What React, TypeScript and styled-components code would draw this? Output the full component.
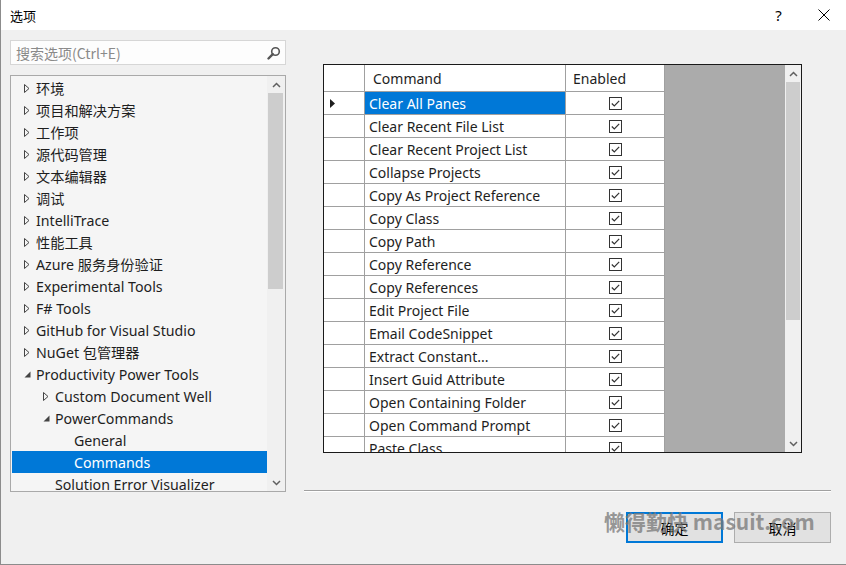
import styled, { createGlobalStyle } from "styled-components";

const GlobalStyle = createGlobalStyle`
  html, body {
    margin: 0;
    padding: 0;
    background: #f0f0f0;
  }
  body {
    font-family: "Noto Sans", "Noto Sans CJK SC", sans-serif;
    color: #1e1e1e;
  }
`;

const Window = styled.div`
  width: 846px;
  height: 565px;
  box-sizing: border-box;
  border-left: 1px solid #8c8c8c;
  border-bottom: 1px solid #8c8c8c;
  background: #f0f0f0;
  display: flex;
  flex-direction: column;
  position: relative;
  overflow: hidden;
`;

const TitleBar = styled.div`
  height: 30px;
  background: #ffffff;
  display: flex;
  align-items: center;
  padding-left: 9px;
  font-family: "Noto Sans CJK SC", sans-serif;
  font-size: 13px;
  color: #000;
`;

const TitleText = styled.div`
  flex: 1;
`;

const TitleButton = styled.div`
  width: 45px;
  height: 30px;
  display: flex;
  align-items: center;
  justify-content: center;
  font-family: "Noto Sans", sans-serif;
  font-size: 15px;
  color: #000;
`;

const Body = styled.div`
  flex: 1;
  display: flex;
  padding: 10px 15px 0 9px;
`;

const LeftColumn = styled.div`
  width: 276px;
  display: flex;
  flex-direction: column;
  gap: 10px;
`;

const SearchBox = styled.div`
  height: 25px;
  box-sizing: border-box;
  border: 1px solid #d6d6d6;
  background: #fdfdfd;
  display: flex;
  align-items: center;
  padding: 0 4px 0 5px;
  font-family: "Noto Sans CJK SC", sans-serif;
  font-size: 14px;
  color: #8a8a8a;
`;

const SearchText = styled.div`
  flex: 1;
`;

const TreePanel = styled.div`
  height: 417px;
  box-sizing: border-box;
  border: 1px solid #a9a9a9;
  background: #f5f5f5;
  display: flex;
`;

const TreeList = styled.div`
  flex: 1;
  padding: 1px 0 0 1px;
  overflow: hidden;
`;

const TreeRow = styled.div<{ $level: number; $selected?: boolean }>`
  height: 22px;
  display: flex;
  align-items: center;
  padding-left: ${(p) => 8 + p.$level * 19}px;
  background: ${(p) => (p.$selected ? "#0078d7" : "transparent")};
  color: ${(p) => (p.$selected ? "#ffffff" : "#1e1e1e")};
  font-size: 14.2px;
  white-space: nowrap;
`;

const Arrow = styled.div`
  width: 14px;
  height: 22px;
  margin-right: 2px;
  display: flex;
  align-items: center;
  justify-content: center;
`;

const ScrollBar = styled.div<{ $width: number }>`
  width: ${(p) => p.$width}px;
  background: #f0f0f0;
  display: flex;
  flex-direction: column;
`;

const ScrollArrow = styled.div`
  height: 17px;
  display: flex;
  align-items: center;
  justify-content: center;
`;

const ScrollThumb = styled.div<{ $height: number; $inset: string }>`
  height: ${(p) => p.$height}px;
  margin: ${(p) => p.$inset};
  background: #cdcdcd;
`;

const ScrollFill = styled.div`
  flex: 1;
`;

const RightColumn = styled.div`
  flex: 1;
  margin-left: 18px;
  display: flex;
  flex-direction: column;
`;

const GridFrame = styled.div`
  margin: 24px 0 0 19px;
  width: 479px;
  height: 389px;
  box-sizing: border-box;
  border: 1px solid #1a1a1a;
  display: flex;
  background: #ababab;
`;

const GridTable = styled.div`
  width: 341px;
  overflow: hidden;
  display: flex;
  flex-direction: column;
`;

const GridRow = styled.div`
  display: flex;
  flex-shrink: 0;
`;

const HeaderCell = styled.div<{ $width: number; $pad?: number }>`
  width: ${(p) => p.$width}px;
  height: 27px;
  box-sizing: border-box;
  background: #ffffff;
  border-right: 1px solid #a0a0a0;
  border-bottom: 1px solid #a0a0a0;
  display: flex;
  align-items: center;
  padding-left: ${(p) => p.$pad ?? 0}px;
  font-size: 14px;
  color: #1e1e1e;
`;

const Cell = styled.div<{ $width: number; $selected?: boolean; $center?: boolean }>`
  width: ${(p) => p.$width}px;
  height: 23px;
  box-sizing: border-box;
  background: ${(p) => (p.$selected ? "#0078d7" : "#ffffff")};
  color: ${(p) => (p.$selected ? "#ffffff" : "#1e1e1e")};
  border-right: 1px solid #a0a0a0;
  border-bottom: 1px solid #a0a0a0;
  display: flex;
  align-items: center;
  justify-content: ${(p) => (p.$center ? "center" : "flex-start")};
  padding-left: ${(p) => (p.$center ? 0 : 4)}px;
  font-size: 14px;
  white-space: nowrap;
`;

const RowMarker = styled.svg`
  margin-left: -24px;
`;

const GridEmpty = styled.div`
  flex: 1;
`;

const Separator = styled.div`
  margin-top: 37px;
  height: 1px;
  background: #a0a0a0;
  border-bottom: 1px solid #ffffff;
`;

const ButtonRow = styled.div`
  display: flex;
  justify-content: flex-end;
  gap: 11px;
  margin-top: 20px;
`;

const Button = styled.div<{ $default?: boolean }>`
  width: 97px;
  height: 31px;
  box-sizing: border-box;
  background: #e1e1e1;
  border: ${(p) => (p.$default ? "2px solid #0078d7" : "1px solid #adadad")};
  display: flex;
  align-items: center;
  justify-content: center;
  font-family: "Noto Sans CJK SC", sans-serif;
  font-size: 14px;
  color: #000;
`;

const Watermark = styled.div`
  position: absolute;
  left: 603px;
  top: 506px;
  font-family: "Noto Sans CJK SC", "Liberation Sans", sans-serif;
  font-weight: 700;
  font-size: 21px;
  color: rgba(120, 120, 120, 0.75);
  white-space: nowrap;
  pointer-events: none;
`;

const ClosedArrow = () => (
  <svg width="6" height="9" viewBox="0 0 6 9">
    <path d="M0.5 0.5 L5 4.5 L0.5 8.5 Z" fill="none" stroke="#444" strokeWidth="1" />
  </svg>
);

const OpenArrow = () => (
  <svg width="7" height="7" viewBox="0 0 7 7">
    <path d="M6.5 0.5 L6.5 6.5 L0.5 6.5 Z" fill="#444" />
  </svg>
);

const Check = () => (
  <svg width="13" height="13" viewBox="0 0 13 13">
    <rect x="0.5" y="0.5" width="12" height="12" fill="#fff" stroke="#333" strokeWidth="1" />
    <path d="M2.8 6.5 L5.3 9 L10.2 3.8" fill="none" stroke="#333" strokeWidth="1.2" />
  </svg>
);

const Caret = ({ up }: { up?: boolean }) => (
  <svg width="9" height="6" viewBox="0 0 9 6">
    <path d={up ? "M1 5 L4.5 1.5 L8 5" : "M1 1 L4.5 4.5 L8 1"} fill="none" stroke="#606060" strokeWidth="1.5" />
  </svg>
);

type TreeItem = { label: string; level: number; arrow?: "closed" | "open"; selected?: boolean };

const tree: TreeItem[] = [
  { label: "环境", level: 0, arrow: "closed" },
  { label: "项目和解决方案", level: 0, arrow: "closed" },
  { label: "工作项", level: 0, arrow: "closed" },
  { label: "源代码管理", level: 0, arrow: "closed" },
  { label: "文本编辑器", level: 0, arrow: "closed" },
  { label: "调试", level: 0, arrow: "closed" },
  { label: "IntelliTrace", level: 0, arrow: "closed" },
  { label: "性能工具", level: 0, arrow: "closed" },
  { label: "Azure 服务身份验证", level: 0, arrow: "closed" },
  { label: "Experimental Tools", level: 0, arrow: "closed" },
  { label: "F# Tools", level: 0, arrow: "closed" },
  { label: "GitHub for Visual Studio", level: 0, arrow: "closed" },
  { label: "NuGet 包管理器", level: 0, arrow: "closed" },
  { label: "Productivity Power Tools", level: 0, arrow: "open" },
  { label: "Custom Document Well", level: 1, arrow: "closed" },
  { label: "PowerCommands", level: 1, arrow: "open" },
  { label: "General", level: 2 },
  { label: "Commands", level: 2, selected: true },
  { label: "Solution Error Visualizer", level: 1 },
];

const commands = [
  "Clear All Panes",
  "Clear Recent File List",
  "Clear Recent Project List",
  "Collapse Projects",
  "Copy As Project Reference",
  "Copy Class",
  "Copy Path",
  "Copy Reference",
  "Copy References",
  "Edit Project File",
  "Email CodeSnippet",
  "Extract Constant...",
  "Insert Guid Attribute",
  "Open Containing Folder",
  "Open Command Prompt",
  "Paste Class",
  "Paste Reference",
];

export default function App() {
  return (
    <>
      <GlobalStyle />
      <Window>
        <TitleBar>
          <TitleText>选项</TitleText>
          <TitleButton>?</TitleButton>
          <TitleButton>
            <svg width="12" height="12" viewBox="0 0 12 12">
              <path d="M0.5 0.5 L11.5 11.5 M11.5 0.5 L0.5 11.5" stroke="#000" strokeWidth="1" />
            </svg>
          </TitleButton>
        </TitleBar>
        <Body>
          <LeftColumn>
            <SearchBox>
              <SearchText>搜索选项(Ctrl+E)</SearchText>
              <svg width="14" height="14" viewBox="0 0 14 14">
                <circle cx="8.5" cy="5.5" r="3.8" fill="none" stroke="#555" strokeWidth="1.6" />
                <path d="M5.8 8.2 L1.5 12.5" stroke="#555" strokeWidth="2.4" strokeLinecap="round" />
              </svg>
            </SearchBox>
            <TreePanel>
              <TreeList>
                {tree.map((t) => (
                  <TreeRow key={t.label} $level={t.level} $selected={t.selected}>
                    <Arrow>
                      {t.arrow === "closed" && <ClosedArrow />}
                      {t.arrow === "open" && <OpenArrow />}
                    </Arrow>
                    {t.label}
                  </TreeRow>
                ))}
              </TreeList>
              <ScrollBar $width={18}>
                <ScrollArrow>
                  <Caret up />
                </ScrollArrow>
                <ScrollThumb $height={196} $inset="0 2px 0 1px" />
                <ScrollFill />
                <ScrollArrow>
                  <Caret />
                </ScrollArrow>
              </ScrollBar>
            </TreePanel>
          </LeftColumn>
          <RightColumn>
            <GridFrame>
              <GridTable>
                <GridRow>
                  <HeaderCell $width={41} />
                  <HeaderCell $width={201} $pad={8}>
                    Command
                  </HeaderCell>
                  <HeaderCell $width={99} $pad={7}>
                    Enabled
                  </HeaderCell>
                </GridRow>
                {commands.map((c, i) => (
                  <GridRow key={c}>
                    <Cell $width={41} $center>
                      {i === 0 && (
                        <RowMarker width="5" height="9" viewBox="0 0 5 9">
                          <path d="M0 0 L5 4.5 L0 9 Z" fill="#1e1e1e" />
                        </RowMarker>
                      )}
                    </Cell>
                    <Cell $width={201} $selected={i === 0}>
                      {c}
                    </Cell>
                    <Cell $width={99} $center>
                      <Check />
                    </Cell>
                  </GridRow>
                ))}
              </GridTable>
              <GridEmpty />
              <ScrollBar $width={16}>
                <ScrollArrow>
                  <Caret up />
                </ScrollArrow>
                <ScrollThumb $height={238} $inset="0 1px" />
                <ScrollFill />
                <ScrollArrow>
                  <Caret />
                </ScrollArrow>
              </ScrollBar>
            </GridFrame>
            <Separator />
            <ButtonRow>
              <Button $default>确定</Button>
              <Button>取消</Button>
            </ButtonRow>
          </RightColumn>
        </Body>
        <Watermark>懒得勤快 masuit.com</Watermark>
      </Window>
    </>
  );
}
